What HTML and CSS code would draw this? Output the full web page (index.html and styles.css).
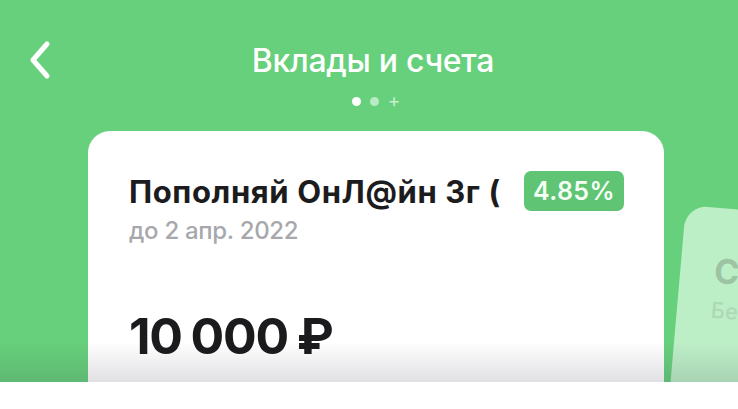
FILE: index.html
```html
<!DOCTYPE html>
<html lang="ru">
<head>
<meta charset="utf-8">
<link rel="stylesheet" href="styles.css">
</head>
<body>
<div class="screen">
  <header class="topbar">
    <button class="back" aria-label="Назад">
      <svg width="26" height="40" viewBox="0 0 26 40"><path d="M20 4 L6 20 L20 36" fill="none" stroke="#fff" stroke-width="5" stroke-linecap="round" stroke-linejoin="round"/></svg>
    </button>
    <h1 class="title">Вклады и счета</h1>
    <span></span>
  </header>
  <div class="pager">
    <span class="dot active"></span>
    <span class="dot"></span>
    <span class="plus">+</span>
  </div>
  <div class="carousel">
    <div class="card">
      <div class="card-head">
        <div class="card-title">Пополняй ОнЛ@йн 3г (</div>
        <div class="badge">4.85%</div>
      </div>
      <div class="card-sub">до 2 апр. 2022</div>
      <div class="amount">10 000 ₽</div>
    </div>
    <div class="card next">
      <div class="next-title">С</div>
      <div class="next-sub">Бе</div>
    </div>
  </div>
  <div class="fade"></div>
</div>
</body>
</html>
```
FILE: styles.css
```css
* { box-sizing: border-box; }
html, body { margin: 0; padding: 0; }
body {
  width: 738px;
  height: 409px;
  background: #ffffff;
  font-family: Inter, "Noto Sans", sans-serif;
  overflow: hidden;
}
.screen {
  position: relative;
  height: 382px;
  background: #67d07c;
  overflow: hidden;
}
.topbar {
  display: grid;
  grid-template-columns: 1fr auto 1fr;
  align-items: center;
  height: 60px;
  margin-top: 30px;
}
.back {
  justify-self: start;
  margin-left: 27px;
  padding: 0;
  border: 0;
  background: none;
  display: flex;
}
.title {
  margin: 0;
  color: #ffffff;
  font-size: 32px;
  font-weight: 500;
  letter-spacing: -0.3px;
  position: relative;
  left: 4px;
}
.pager {
  display: flex;
  justify-content: center;
  align-items: center;
  gap: 9px;
  height: 22px;
  margin-left: 14px;
}
.dot {
  width: 9px;
  height: 9px;
  border-radius: 50%;
  background: rgba(255,255,255,0.55);
}
.dot.active { background: #ffffff; }
.plus {
  color: rgba(255,255,255,0.65);
  font-size: 19px;
  line-height: 1;
  font-weight: 400;
  margin-top: -2px;
}
.carousel {
  display: flex;
  gap: 22px;
  padding-left: 88px;
  margin-top: 19px;
}
.card {
  flex: none;
  width: 576px;
  height: 300px;
  background: #ffffff;
  border-radius: 22px;
  padding: 40px 40px 0 41px;
}
.card-head {
  display: flex;
  align-items: center;
  justify-content: space-between;
}
.card-title {
  white-space: nowrap;
  font-size: 31px;
  font-weight: 700;
  color: #1c1c1e;
  letter-spacing: 0.6px;
}
.badge {
  flex: none;
  width: 100px;
  height: 40px;
  border-radius: 7px;
  background: #5fc473;
  color: #f4fff6;
  font-size: 25px;
  font-weight: 600;
  display: flex;
  align-items: center;
  justify-content: center;
  letter-spacing: 0.4px;
}
.card-sub {
  margin-top: 5px;
  color: #a7a8ad;
  font-size: 24px;
  font-weight: 500;
  letter-spacing: -0.3px;
}
.amount {
  margin-top: 61px;
  color: #1b1b1d;
  font-size: 50px;
  font-weight: 700;
  letter-spacing: -1.2px;
  word-spacing: -2px;
}
.card.next {
  width: 500px;
  background: #bdefc7;
  margin-top: 74px;
  transform: rotate(5deg);
  transform-origin: top left;
  padding: 42px 34px;
}
.next-title {
  color: #9cc4a3;
  font-size: 34px;
  font-weight: 700;
}
.next-sub {
  margin-top: 6px;
  color: #aed9b6;
  font-size: 22px;
  font-weight: 500;
}
.fade {
  position: absolute;
  left: 0;
  right: 0;
  bottom: 0;
  height: 40px;
  background: linear-gradient(to bottom, rgba(40,40,60,0) 0%, rgba(40,40,60,0.14) 100%);
  pointer-events: none;
}
```
